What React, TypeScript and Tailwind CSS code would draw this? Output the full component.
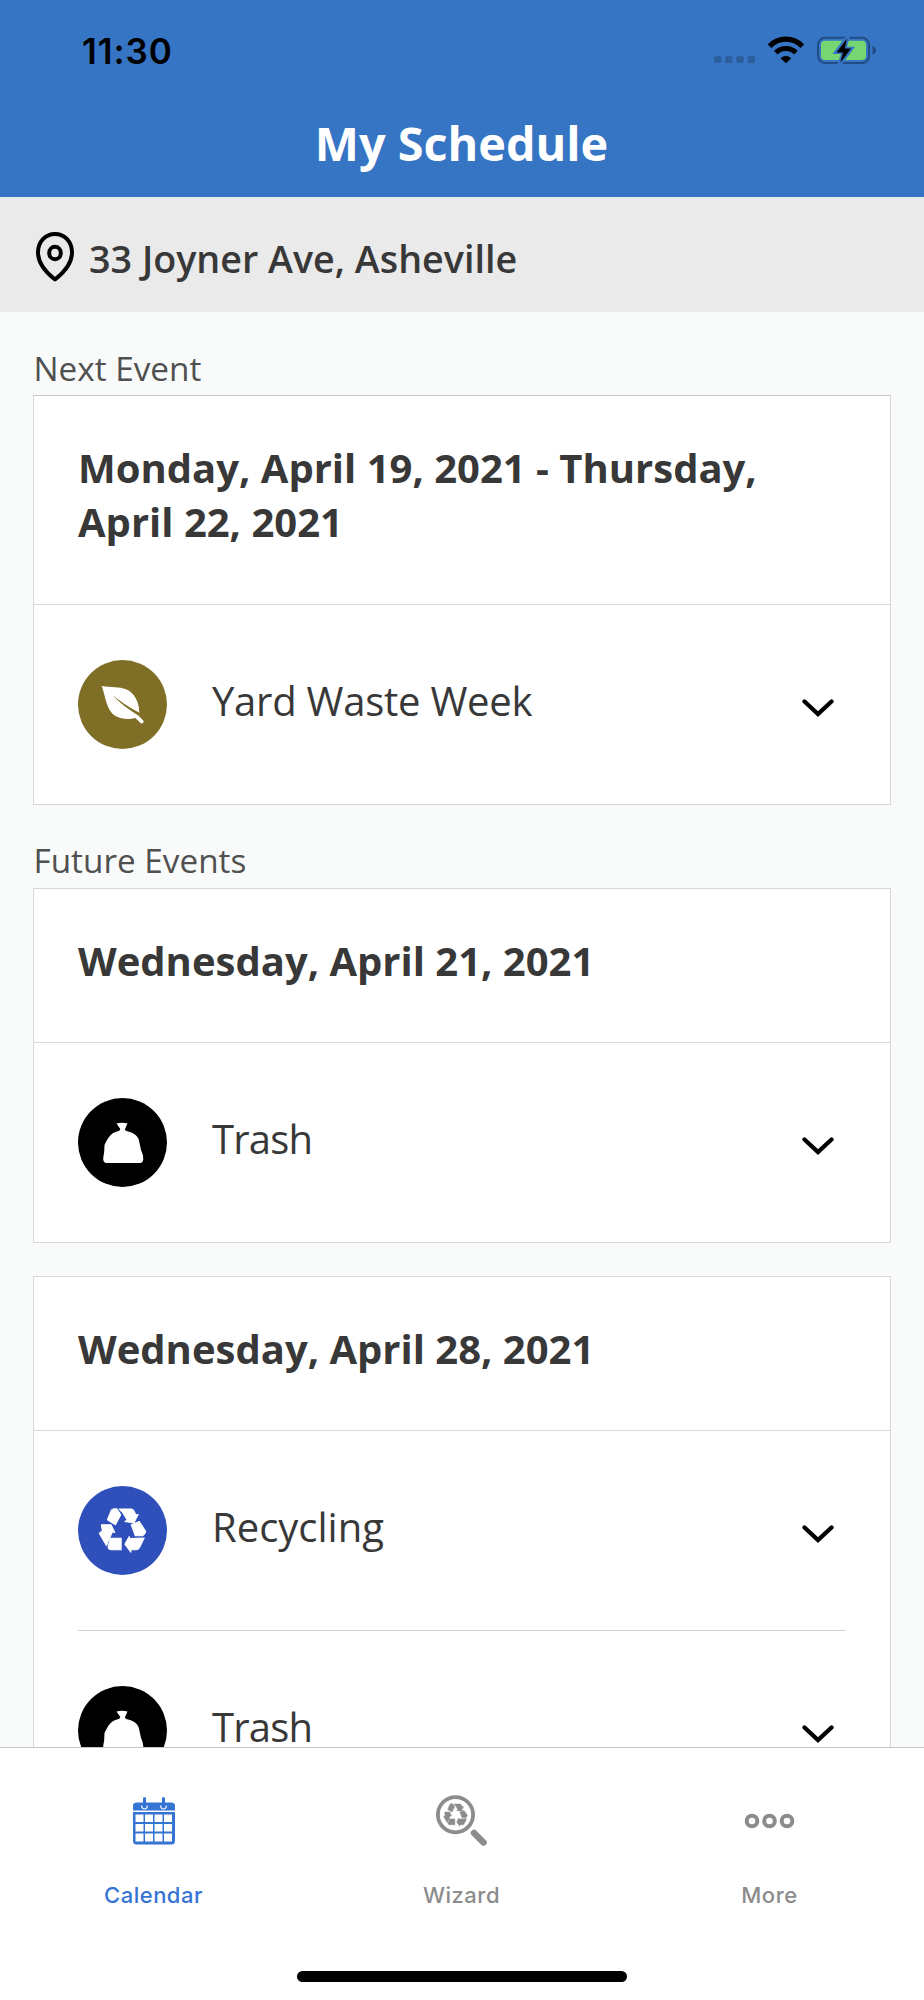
import React from "react";

function Pin() {
  return (
    <svg className="mt-[4px] ml-[36px] h-[50px] w-[38px] shrink-0" viewBox="0 0 38 50" fill="none" stroke="#000" strokeWidth="4" strokeLinejoin="round">
      <path d="M19 2C9.500 2 2 9.700 2 20.500C2 33 12 42 19 47.500C26 42 36 33 36 20.500C36 9.700 28.500 2 19 2Z" />
      <ellipse cx="19" cy="21" rx="5.800" ry="6.200" />
    </svg>
  );
}

function Leaf() {
  return (
    <svg className="size-[89px]" viewBox="6 6 267 267">
      <path d="M77 84C105 88 130 86 150 94C176 104 190 134 190 164L204 192L196 197L178 180C160 185 136 184 118 174C90 156 90 118 77 84Z" fill="#fff" />
      <path d="M109 111Q150 144 193 166L212 190L204 190L188 173Q142 146 109 111Z" fill="#7f6f26" />
    </svg>
  );
}

function Bag() {
  return (
    <svg className="size-[89px]" viewBox="0 0 89 89">
      <path d="M38.500 25.500Q44 24 49.500 25.500L46.800 31.500Q47.500 33 52 34C57.500 36 61 39 61.500 45L63 52Q65.500 57 65.300 61Q65 65 62 65H28Q25 64.500 25.200 60Q26.500 55 26.500 47C29 41.500 33 34.500 39 33.500Q42 33 42.300 31Z" fill="#fff" />
    </svg>
  );
}

function Recycle({ className }: { className: string }) {
  return (
    <svg className={className} viewBox="67 69 146 140" fill="currentColor" stroke="currentColor" strokeWidth="3" strokeLinejoin="round">
      <path d="M130 75H166Q171 75 174 80L180 93L187 91L174 117L147 112L154 108L141 86Z" />
      <path d="M107 78Q110 74 116 74H123L135 92L119 122L95 107Z" />
      <path d="M166 122L190 112L209 141Q208 151 200 155H178Z" />
      <path d="M147 180L160 157V163L205 161L191 190Q188 196 182 196H165V204Z" />
      <path d="M104 162H136V196H106Q97 196 97 187Z" />
      <path d="M77 122H106L117 145L110 143L92 184L71 148Q71 145 80 140Z" />
    </svg>
  );
}

type Kind = "leaf" | "bag" | "recycle";
type RowData = { kind: Kind; label: string; tracking?: string };

function Row({ kind, label, tracking = "" }: RowData) {
  const bg = kind === "leaf" ? "bg-[#7f6f26]" : kind === "bag" ? "bg-black" : "bg-[#2f50bb]";
  return (
    <div className="flex h-[199px] items-center pr-[56px] pl-[44px]">
      <div className={`flex size-[89px] shrink-0 items-center justify-center rounded-full ${bg}`}>
        {kind === "leaf" && <Leaf />}
        {kind === "bag" && <Bag />}
        {kind === "recycle" && <Recycle className="h-[47px] w-[49px] text-white" />}
      </div>
      <span className={`-mt-2 flex-1 pl-[45px] text-[40px] leading-[54px] ${tracking}`}>{label}</span>
      <svg className="mt-[6px] h-[18px] w-[32px]" viewBox="0 0 32 18" fill="none" stroke="#000" strokeWidth="4.300" strokeLinecap="round">
        <path d="M2.500 2.500L16 15L29.500 2.500" />
      </svg>
    </div>
  );
}

function Card({ date, rows, className, headClass }: { date: string; rows: RowData[]; className: string; headClass: string }) {
  return (
    <section className={`mr-[33px] ml-[33px] border border-[#d6d8d7] bg-white ${className}`}>
      <h2 className={`border-b border-[#d9dada] pt-[45px] pr-[60px] pl-[44px] text-[40px] leading-[54px] font-bold ${headClass}`}>{date}</h2>
      {rows.map((r, i) => (
        <React.Fragment key={i}>
          {i > 0 && <div className="mx-[44px] h-px bg-[#d3d3d3]" />}
          <Row {...r} />
        </React.Fragment>
      ))}
    </section>
  );
}

function StatusIcons() {
  return (
    <svg className="h-[30px] w-[165px]" viewBox="712 35 165 30">
      <g fill="#2c5d9d">
        <rect x="714" y="56" width="7.500" height="7" rx="2" />
        <rect x="725" y="56" width="7.500" height="7" rx="2" />
        <rect x="736.300" y="56" width="7.500" height="7" rx="2" />
        <rect x="747.600" y="56" width="7.500" height="7" rx="2" />
      </g>
      <g fill="none" stroke="#000" strokeWidth="5.200">
        <path d="M769.600 46.200A22.500 22.500 0 0 1 802.200 46.200" />
        <path d="M775.800 52.600A14.500 14.500 0 0 1 796 52.600" />
      </g>
      <path d="M780.500 58.200Q785.900 53.600 791.300 58.200L785.900 63.200Z" fill="#000" />
      <rect x="818" y="37.800" width="51" height="25.200" rx="7" fill="none" stroke="#224c84" strokeWidth="2" />
      <path d="M872.500 45.800Q876 47 876 50.300Q876 53.600 872.500 54.800Z" fill="#224c84" />
      <rect x="821" y="40.800" width="45" height="19.200" rx="4" fill="#76d672" />
      <path d="M846 36L832.500 54H841L837 65H841.500L855 46.800H847L850 36Z" fill="#3674c4" />
      <path d="M847 38.500L836.500 52.500H843L840.300 62.800L851 48.500H844.800Z" fill="#000" />
    </svg>
  );
}

function CalendarIcon() {
  return (
    <svg className="h-[48px] w-[42px]" viewBox="0 0 42 48">
      <path d="M0 13.500V9Q0 5.500 3.500 5.500H38.500Q42 5.500 42 9V13.500Z" fill="#3674d4" />
      <g fill="none" stroke="#fff" strokeWidth="1.200">
        <path d="M8.700 8.500Q8.700 12 11.500 12Q14.300 12 14.300 8.500" />
        <path d="M27.700 8.500Q27.700 12 30.500 12Q33.300 12 33.300 8.500" />
      </g>
      <path d="M11.500 1.500V9M30.500 1.500V9" stroke="#3674d4" strokeWidth="3" strokeLinecap="round" />
      <path fillRule="evenodd" fill="#3674d4" d="M0 15H42V44Q42 47.500 38.500 47.500H3.500Q0 47.500 0 44ZM2.500 17.500V25H10.500V17.500ZM12 17.500V25H20V17.500ZM21.500 17.500V25H29.500V17.500ZM31 17.500V25H39V17.500ZM2.500 27V34.500H10.500V27ZM12 27V34.500H20V27ZM21.500 27V34.500H29.500V27ZM31 27V34.500H39V27ZM2.500 36.500V44.500H10.500V36.500ZM12 36.500V44.500H20V36.500ZM21.500 36.500V44.500H29.500V36.500ZM31 36.500V44.500H39V36.500Z" />
    </svg>
  );
}

function WizardIcon() {
  return (
    <div className="relative h-[51px] w-[51px]">
      <svg className="size-[51px]" viewBox="0 0 51 51" fill="none" stroke="#8c8c8c">
        <circle cx="19.500" cy="19.700" r="17.600" strokeWidth="3.800" />
        <path d="M38 38L47.500 47.500" strokeWidth="6.500" strokeLinecap="round" />
      </svg>
      <Recycle className="absolute top-[8px] left-[7px] h-[24px] w-[25px] text-[#8c8c8c]" />
    </div>
  );
}

function MoreIcon() {
  return (
    <svg className="h-[16px] w-[51px]" viewBox="0 0 51 16" fill="none" stroke="#8c8c8c" strokeWidth="4">
      <circle cx="8" cy="8" r="5.300" />
      <circle cx="25.500" cy="8" r="5.300" />
      <circle cx="43" cy="8" r="5.300" />
    </svg>
  );
}

function Tab({ label, className, children }: { label: string; className: string; children: React.ReactNode }) {
  return (
    <div className={`flex flex-1 flex-col items-center pr-px ${className}`}>
      <div className="mt-[45px] flex h-[55px] items-center">{children}</div>
      <span className="mt-[32px] text-[22px] leading-[30px] font-medium tracking-[0.500px]">{label}</span>
    </div>
  );
}

export default function App() {
  return (
    <div className="flex h-[2000px] w-[924px] flex-col overflow-hidden bg-[#f9fbfa] font-['Open_Sans',sans-serif] text-[#383838]">
      <header className="h-[197px] shrink-0 bg-[#3674c4]">
        <div className="flex h-[100px] items-center justify-between pr-[47px] pl-[82px]">
          <span className="mt-[2px] font-['Inter',sans-serif] text-[35px] font-semibold tracking-[0.900px] text-black">11:30</span>
          <StatusIcons />
        </div>
        <h1 className="mt-[11px] pr-px text-center text-[46.800px] leading-[64px] font-bold text-white">My Schedule</h1>
      </header>
      <div className="flex h-[115px] shrink-0 items-center bg-[#eaeaea]">
        <Pin />
        <span className="mt-[8px] ml-[15px] text-[37.700px] leading-[52px] font-semibold">33 Joyner Ave, Asheville</span>
      </div>
      <main className="min-h-0 flex-1 overflow-hidden">
        <p className="mt-[34px] ml-[33.500px] h-[49px] text-[33.300px] leading-[45px] text-[#505050]">Next Event</p>
        <Card
          className="h-[410px] border-t-[#c6c8c7]"
          headClass="pb-[55px]"
          date="Monday, April 19, 2021 - Thursday, April 22, 2021"
          rows={[{ kind: "leaf", label: "Yard Waste Week", tracking: "tracking-[-0.250px]" }]}
        />
        <p className="mt-[33px] ml-[33.500px] h-[50px] text-[33.300px] leading-[45px] text-[#505050]">Future Events</p>
        <Card
          className="h-[355px]"
          headClass="pb-[54px]"
          date="Wednesday, April 21, 2021"
          rows={[{ kind: "bag", label: "Trash", tracking: "tracking-[-0.800px]" }]}
        />
        <Card
          className="mt-[33px] h-[600px]"
          headClass="pb-[54px]"
          date="Wednesday, April 28, 2021"
          rows={[
            { kind: "recycle", label: "Recycling" },
            { kind: "bag", label: "Trash", tracking: "tracking-[-0.800px]" },
          ]}
        />
      </main>
      <nav className="flex h-[253px] shrink-0 flex-col items-center border-t border-[#c4c4c4] bg-white font-['Inter',sans-serif]">
        <div className="flex w-full flex-1">
          <Tab label="Calendar" className="text-[#3674d4]"><CalendarIcon /></Tab>
          <Tab label="Wizard" className="text-[#8c8c8c]"><WizardIcon /></Tab>
          <Tab label="More" className="text-[#8c8c8c]"><MoreIcon /></Tab>
        </div>
        <div className="mb-[18px] h-[11px] w-[330px] rounded-full bg-black" />
      </nav>
    </div>
  );
}
